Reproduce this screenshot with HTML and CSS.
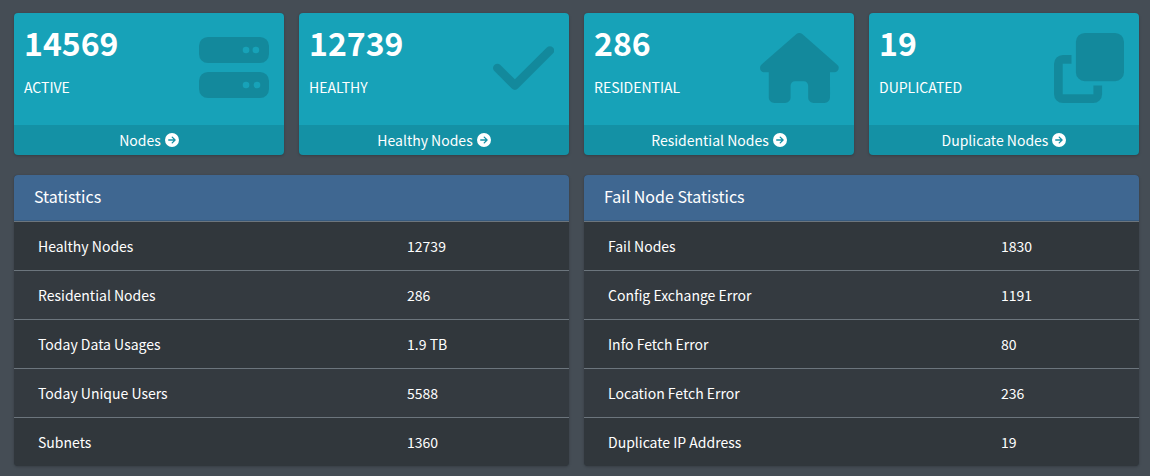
FILE: index.html
```
<!DOCTYPE html>
<html lang="en">
<head>
<meta charset="utf-8">
<title>Node Dashboard</title>
<link rel="stylesheet" href="styles.css">
</head>
<body>
<svg class="sprite" aria-hidden="true">
  <symbol id="arrow" viewBox="0 0 512 512"><path fill-rule="evenodd" d="M256 0a256 256 0 1 1 0 512 256 256 0 0 1 0-512zM281 135a24 24 0 0 0-34 34l63 63H136a24 24 0 0 0 0 48h174l-63 63a24 24 0 0 0 34 34l104-104a24 24 0 0 0 0-34z"/></symbol>
</svg>
<main class="dashboard">
  <section class="boxes">
    <article class="box">
      <div class="box-inner">
        <div><h3 class="box-value">14569</h3><p class="box-label">ACTIVE</p></div>
        <svg class="box-icon" viewBox="0 0 512 512" aria-hidden="true"><path fill-rule="evenodd" d="M64 29h384a64 64 0 0 1 64 64v62a64 64 0 0 1-64 64H64a64 64 0 0 1-64-64V93a64 64 0 0 1 64-64zM344 100a24 24 0 1 0 0 48 24 24 0 0 0 0-48zM416 100a24 24 0 1 0 0 48 24 24 0 0 0 0-48zM64 285h384a64 64 0 0 1 64 64v62a64 64 0 0 1-64 64H64a64 64 0 0 1-64-64v-62a64 64 0 0 1 64-64zM344 356a24 24 0 1 0 0 48 24 24 0 0 0 0-48zM424 356a24 24 0 1 0 0 48 24 24 0 0 0 0-48z"/></svg>
      </div>
      <a class="box-footer" href="#nodes">Nodes <svg class="arrow" aria-hidden="true"><use href="#arrow"/></svg></a>
    </article>
    <article class="box">
      <div class="box-inner">
        <div><h3 class="box-value">12739</h3><p class="box-label">HEALTHY</p></div>
        <svg class="box-icon" viewBox="0 0 448 512" aria-hidden="true"><path d="M438.6 105.4c12.5 12.5 12.5 32.8 0 45.3l-256 256c-12.5 12.5-32.8 12.5-45.3 0l-128-128c-12.5-12.5-12.5-32.8 0-45.3s32.8-12.5 45.3 0L160 338.7 393.4 105.4c12.5-12.5 32.8-12.5 45.3 0z"/></svg>
      </div>
      <a class="box-footer" href="#healthy">Healthy Nodes <svg class="arrow" aria-hidden="true"><use href="#arrow"/></svg></a>
    </article>
    <article class="box">
      <div class="box-inner">
        <div><h3 class="box-value">286</h3><p class="box-label">RESIDENTIAL</p></div>
        <svg class="box-icon" viewBox="0 0 576 512" aria-hidden="true"><path d="M575.8 255.5c0 18-15 32.1-32 32.1h-32l.7 160.2c0 2.7-.2 5.4-.5 8.1V472c0 22.1-17.9 40-40 40H456c-1.1 0-2.2 0-3.3-.1c-1.4 .1-2.8 .1-4.2 .1H416 392c-22.1 0-40-17.9-40-40V448 384c0-17.7-14.3-32-32-32H256c-17.7 0-32 14.3-32 32v64 24c0 22.1-17.9 40-40 40H160 128.1c-1.5 0-3-.1-4.5-.2c-1.2 .1-2.4 .2-3.6 .2H104c-22.1 0-40-17.9-40-40V360c0-.9 0-1.9 .1-2.8V287.6H32c-18 0-32-14-32-32.1c0-9 3-17 10-24L266.4 8c7-7 15-8 22-8s15 2 21 7L564.8 231.5c8 7 12 15 11 24z"/></svg>
      </div>
      <a class="box-footer" href="#residential">Residential Nodes <svg class="arrow" aria-hidden="true"><use href="#arrow"/></svg></a>
    </article>
    <article class="box">
      <div class="box-inner">
        <div><h3 class="box-value">19</h3><p class="box-label">DUPLICATED</p></div>
        <svg class="box-icon" viewBox="0 0 512 512" aria-hidden="true"><path d="M224 0h224a64 64 0 0 1 64 64v224a64 64 0 0 1-64 64H224a64 64 0 0 1-64-64V64a64 64 0 0 1 64-64zM0 224a64 64 0 0 1 64-64h64v64H64v224h224v-64h64v64a64 64 0 0 1-64 64H64a64 64 0 0 1-64-64z"/></svg>
      </div>
      <a class="box-footer" href="#duplicate">Duplicate Nodes <svg class="arrow" aria-hidden="true"><use href="#arrow"/></svg></a>
    </article>
  </section>
  <section class="panels">
    <article class="card">
      <h3 class="card-title" id="stats">Statistics</h3>
      <table class="table" aria-labelledby="stats">
        <colgroup><col class="col-name"><col></colgroup>
        <tbody>
          <tr><td>Healthy Nodes</td><td>12739</td></tr>
          <tr><td>Residential Nodes</td><td>286</td></tr>
          <tr><td>Today Data Usages</td><td>1.9 TB</td></tr>
          <tr><td>Today Unique Users</td><td>5588</td></tr>
          <tr><td>Subnets</td><td>1360</td></tr>
        </tbody>
      </table>
    </article>
    <article class="card">
      <h3 class="card-title" id="fails">Fail Node Statistics</h3>
      <table class="table" aria-labelledby="fails">
        <colgroup><col class="col-name-wide"><col></colgroup>
        <tbody>
          <tr><td>Fail Nodes</td><td>1830</td></tr>
          <tr><td>Config Exchange Error</td><td>1191</td></tr>
          <tr><td>Info Fetch Error</td><td>80</td></tr>
          <tr><td>Location Fetch Error</td><td>236</td></tr>
          <tr><td>Duplicate IP Address</td><td>19</td></tr>
        </tbody>
      </table>
    </article>
  </section>
</main>
</body>
</html>
```

FILE: styles.css
```
* {
  box-sizing: border-box;
}

body {
  margin: 0;
  background: #454d55;
  color: #fff;
  font-family: "Source Sans Pro", "Noto Sans CJK SC", "Noto Sans", sans-serif;
  font-size: 14px;
  line-height: 24px;
}

h3,
p {
  margin: 0;
}

.sprite {
  display: none;
}

.dashboard {
  display: grid;
  gap: 20px;
  padding: 13px 11px 10px 14px;
}

.boxes,
.panels {
  display: grid;
  gap: 15px;
}

.boxes {
  grid-template-columns: repeat(4, 1fr);
}

.panels {
  grid-template-columns: repeat(2, 1fr);
}

.box,
.card {
  overflow: hidden;
  border-radius: 4px;
  box-shadow: 0 0 1px rgba(0, 0, 0, 0.125), 0 1px 3px rgba(0, 0, 0, 0.2);
}

.box {
  background: #17a2b8;
}

.box-inner {
  display: flex;
  justify-content: space-between;
  padding: 10px 15px 22px 10px;
}

.box-value {
  margin-bottom: 14px;
  font-size: 32px;
  font-weight: 700;
  line-height: 38px;
}

.box-label {
  margin-bottom: 4px;
}

.box-icon {
  height: 70px;
  margin-top: 10px;
  fill: rgba(0, 0, 0, 0.15);
}

.box-footer {
  display: flex;
  align-items: center;
  justify-content: center;
  gap: 4px;
  padding: 3px 0;
  background: rgba(0, 0, 0, 0.1);
  color: #fff;
  text-decoration: none;
}

.arrow {
  width: 14px;
  height: 14px;
  fill: #fff;
}

.card {
  background: #343a40;
}

.card-title {
  padding: 9px 20px 12px;
  border-bottom: 1px solid rgba(0, 0, 0, 0.125);
  background: #3f6791;
  font-size: 16px;
  font-weight: 400;
}

.table {
  width: 100%;
  border-spacing: 0;
  table-layout: fixed;
}

.col-name {
  width: 66.5%;
}

.col-name-wide {
  width: 70.8%;
}

.table td {
  padding: 12px 24px;
  border-top: 1px solid #6c757d;
}

.table tr:nth-child(odd) {
  background: rgba(0, 0, 0, 0.05);
}
```
